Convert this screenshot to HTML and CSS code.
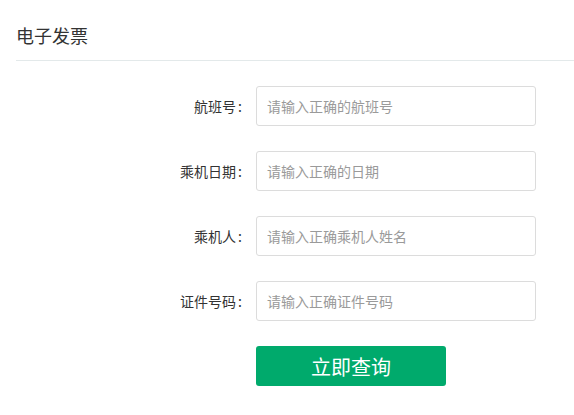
FILE: index.html
```html
<!DOCTYPE html>
<html lang="zh-CN">
<head>
<meta charset="utf-8">
<title>电子发票</title>
<link rel="stylesheet" href="styles.css">
</head>
<body>
<div class="page">
  <div class="header">
    <h1 class="title">电子发票</h1>
  </div>
  <form class="form">
    <div class="row">
      <label class="label">航班号<span class="colon">:</span></label>
      <input class="input" type="text" placeholder="请输入正确的航班号">
    </div>
    <div class="row">
      <label class="label">乘机日期<span class="colon">:</span></label>
      <input class="input" type="text" placeholder="请输入正确的日期">
    </div>
    <div class="row">
      <label class="label">乘机人<span class="colon">:</span></label>
      <input class="input" type="text" placeholder="请输入正确乘机人姓名">
    </div>
    <div class="row">
      <label class="label">证件号码<span class="colon">:</span></label>
      <input class="input" type="text" placeholder="请输入正确证件号码">
    </div>
    <div class="row">
      <span class="label"></span>
      <button class="btn" type="button">立即查询</button>
    </div>
  </form>
</div>
</body>
</html>
```

FILE: styles.css
```css
* { box-sizing: border-box; }
html, body {
  margin: 0;
  padding: 0;
  background: #fff;
  font-family: "Noto Sans CJK SC", "Noto Sans", "Liberation Sans", sans-serif;
  color: #333;
}
.page {
  width: 574px;
}
.header {
  margin-left: 16px;
  padding-top: 23px;
  padding-bottom: 13px;
  border-bottom: 1px solid #e3e9ea;
}
.title {
  margin: 0;
  font-size: 18px;
  line-height: 24px;
  font-weight: normal;
  color: #333;
}
.form {
  display: flex;
  flex-direction: column;
  gap: 25px;
  margin: 25px 0 0 0;
}
.row {
  display: flex;
  align-items: center;
  gap: 12px;
  height: 40px;
}
.label {
  width: 244px;
  text-align: right;
  font-size: 14px;
  color: #333;
}
.colon {
  padding: 0 2px 0 2px;
}
.input {
  width: 280px;
  height: 40px;
  border: 1px solid #dcdcdc;
  border-radius: 3px;
  padding: 0 10px;
  font-family: inherit;
  font-size: 14px;
  color: #333;
  outline: none;
}
.input::placeholder {
  color: #9a9a9a;
}
.btn {
  width: 190px;
  height: 40px;
  border: none;
  border-radius: 3px;
  background: #00aa6c;
  color: #fff;
  font-family: inherit;
  font-size: 20px;
  cursor: pointer;
}
```
